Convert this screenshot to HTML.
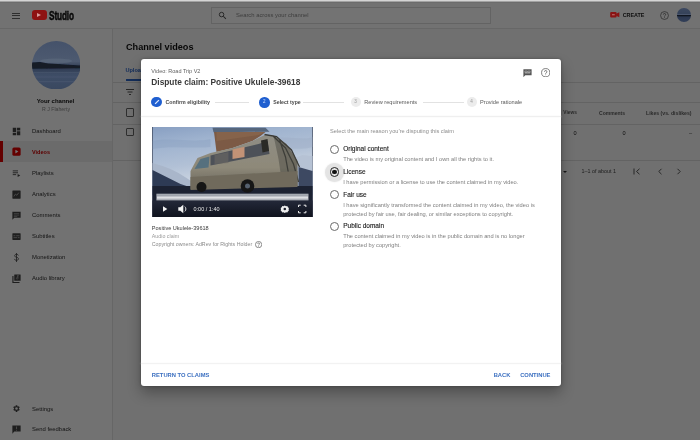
<!DOCTYPE html>
<html><head><meta charset="utf-8">
<style>
*{margin:0;padding:0;box-sizing:border-box}
html,body{width:700px;height:440px;overflow:hidden;background:#fff}
body{font-family:"Liberation Sans",sans-serif;position:relative;color:#0d0d0d}
.a{position:absolute;white-space:nowrap;line-height:1}
#page{position:absolute;left:0;top:0;width:700px;height:440px;background:#f9f9f9}
#topstrip{position:absolute;left:0;top:0;width:700px;height:1.5px;background:#d2d2d2}
#hdr{position:absolute;left:0;top:0;width:700px;height:29px;background:#fcfcfc;border-bottom:1px solid #e4e4e4}
#side{position:absolute;left:0;top:29px;width:113px;height:411px;background:#fcfcfc;border-right:1px solid #e2e2e2}
#main{position:absolute;left:113px;top:29px;width:587px;height:411px}
.nt{left:32px;font-size:5.9px;color:#333}
.ni{left:11.5px}
#overlay{position:absolute;left:0;top:0;width:700px;height:440px;background:rgba(0,0,0,0.55)}
#modal{position:absolute;left:141px;top:59px;width:420px;height:327px;background:#fff;border-radius:3px;box-shadow:0 0 3px rgba(0,0,0,0.3),0 7px 14px rgba(0,0,0,0.3)}
.st{font-size:5.5px;color:#555}
.rad{position:absolute;width:9.2px;height:9.2px;border:1px solid #6a6a6a;border-radius:50%}
.ot{font-size:6.5px;color:#1a1a1a;-webkit-text-stroke:0.12px #1a1a1a}
.od{font-size:5.69px;color:#7e7e7e;line-height:8.6px;white-space:normal}
.btn{font-size:5.8px;font-weight:bold;color:#3b6fc0}
.hl{position:absolute;height:1px;background:#dcdcdc}
</style></head><body><div id="root" style="position:absolute;left:0;top:0;width:700px;height:440px;filter:blur(0.35px)">
<div id="page">
  <div id="hdr">
    <div class="a" style="left:12px;top:12.5px;width:8px;height:1px;background:#666"></div>
    <div class="a" style="left:12px;top:15px;width:8px;height:1px;background:#666"></div>
    <div class="a" style="left:12px;top:17.5px;width:8px;height:1px;background:#666"></div>
    <div class="a" style="left:48.5px;top:10px;font-size:12.8px;font-weight:bold;transform:scaleX(0.645);transform-origin:left top;color:#111;letter-spacing:-0.2px;-webkit-text-stroke:0.5px #111">Studio</div>
    <div class="a" style="left:211px;top:7px;width:280px;height:16.5px;border:1px solid #dcdcdc;background:#fff"></div>
    <svg class="a" style="left:218px;top:11px" width="9" height="9" viewBox="0 0 24 24"><circle cx="9.5" cy="9.5" r="6" fill="none" stroke="#555" stroke-width="2.6"/><path d="M14 14l7 7" stroke="#555" stroke-width="2.8"/></svg>
    <div class="a" style="left:236px;top:13.1px;font-size:5.85px;color:#8a8a8a">Search across your channel</div>
    <div class="a" style="left:622.7px;top:12.4px;font-size:5.4px;font-weight:bold;color:#222;transform:scaleY(1.15);transform-origin:left top">CREATE</div>
    <svg class="a" style="left:660.3px;top:10.8px" width="9" height="9" viewBox="0 0 24 24"><circle cx="12" cy="12" r="10.5" fill="none" stroke="#555" stroke-width="1.8"/><path d="M9 9.5a3 3 0 1 1 4 2.8c-.8.4-1 1-1 2v.5" fill="none" stroke="#555" stroke-width="1.9"/><circle cx="12" cy="17.5" r="1.2" fill="#555"/></svg>
  </div>
  <div id="side">
    <div class="a" style="left:0;top:69.2px;width:111px;text-align:center;font-size:6px;font-weight:bold;color:#111">Your channel</div>
    <div class="a" style="left:0;top:77.6px;width:112px;text-align:center;font-size:5.2px;color:#8a8a8a">R J Flaherty</div>
    <div class="a" style="left:0;top:112.4px;width:112px;height:20.6px;background:#ededed"></div>
    <div class="a" style="left:0;top:112.4px;width:2.6px;height:20.6px;background:#d00"></div>
    <svg class="a ni" style="top:97.8px" width="9" height="9" viewBox="0 0 24 24"><path d="M2 2h9v11H2zM13 2h9v7h-9zM13 11h9v11h-9zM2 15h9v7H2z" fill="#444"/></svg>
    <div class="a nt" style="top:100.2px">Dashboard</div>
    <svg class="a ni" style="top:118.4px" width="9" height="9" viewBox="0 0 24 24"><rect x="1" y="1" width="22" height="22" rx="4" fill="#d00"/><path d="M9 7v10l8-5z" fill="#fff"/></svg>
    <div class="a nt" style="top:121.1px;color:#c00;font-weight:bold;font-size:5.5px">Videos</div>
    <svg class="a ni" style="top:139.8px" width="9" height="9" viewBox="0 0 24 24"><path d="M2 5h14M2 10h14M2 15h9" stroke="#444" stroke-width="2.4"/><path d="M15 13l7 4-7 4z" fill="#444"/></svg>
    <div class="a nt" style="top:142.0px">Playlists</div>
    <svg class="a ni" style="top:160.8px" width="9" height="9" viewBox="0 0 24 24"><rect x="1" y="1" width="22" height="22" rx="1.5" fill="#444"/><path d="M5 17l4-6 4 3 5-7" stroke="#bbb" stroke-width="2" fill="none"/></svg>
    <div class="a nt" style="top:162.9px">Analytics</div>
    <svg class="a ni" style="top:181.8px" width="9" height="9" viewBox="0 0 24 24"><path d="M1 2h22v16H6l-5 5z" fill="#444"/><path d="M5 7h14M5 11h14M5 14.5h9" stroke="#bbb" stroke-width="1.6"/></svg>
    <div class="a nt" style="top:183.8px">Comments</div>
    <svg class="a ni" style="top:202.8px" width="9" height="9" viewBox="0 0 24 24"><rect x="1" y="3" width="22" height="18" rx="1.5" fill="#444"/><path d="M4 10h5M11 10h9M4 15h10M16 15h4" stroke="#bbb" stroke-width="2"/></svg>
    <div class="a nt" style="top:204.7px">Subtitles</div>
    <svg class="a ni" style="top:223.8px" width="9" height="9" viewBox="0 0 24 24"><path d="M12 0v24M17 6.5C16.4 4.3 14.3 3.5 12 3.5 9.3 3.5 7 4.9 7 7.2c0 2.5 2.4 3.3 5 4 2.7.7 5.2 1.6 5.2 4.4 0 2.4-2.4 3.9-5.2 3.9-2.8 0-5-1.3-5.4-3.7" stroke="#444" stroke-width="2.2" fill="none"/></svg>
    <div class="a nt" style="top:225.7px">Monetization</div>
    <svg class="a ni" style="top:244.8px" width="9" height="9" viewBox="0 0 24 24"><path d="M1 5h3v16h16v3H1z" fill="#444"/><rect x="6" y="1" width="17" height="17" rx="1" fill="#444"/><path d="M16 4v7.5a2.2 2.2 0 1 1-1.6-2.1V4h3.5" stroke="#bbb" stroke-width="1.6" fill="none"/></svg>
    <div class="a nt" style="top:246.6px">Audio library</div>
    <svg class="a ni" style="top:375.0px" width="9" height="9" viewBox="0 0 24 24"><path d="M19.4 13a7.5 7.5 0 0 0 0-2l2.1-1.6-2-3.5-2.5 1a7.6 7.6 0 0 0-1.7-1L15 3h-4l-.4 2.9a7.6 7.6 0 0 0-1.7 1l-2.5-1-2 3.5L6.6 11a7.5 7.5 0 0 0 0 2l-2.1 1.6 2 3.5 2.5-1c.5.4 1.1.8 1.7 1L11 21h4l.4-2.9c.6-.2 1.2-.6 1.7-1l2.5 1 2-3.5zM13 15.5a3.5 3.5 0 1 1 0-7 3.5 3.5 0 0 1 0 7z" fill="#444" transform="translate(-1 0)"/></svg>
    <div class="a nt" style="top:377.6px">Settings</div>
    <svg class="a ni" style="top:395.8px" width="9" height="9" viewBox="0 0 24 24"><path d="M1 1h22v16H6l-5 6z" fill="#444"/><path d="M11 4h2v7h-2zM11 13h2v2h-2z" fill="#bbb"/></svg>
    <div class="a nt" style="top:398.1px">Send feedback</div>
  </div>
  <div id="main">
    <div class="a" style="left:13px;top:13.3px;font-size:9.9px;font-weight:bold;color:#111;transform:scaleX(0.925);transform-origin:left top">Channel videos</div>
    <div class="a" style="left:12.4px;top:38.8px;font-size:5.6px;font-weight:bold;color:#2e66c8">Uploads</div>
    <div class="a" style="left:13px;top:50.4px;width:32px;height:2px;background:#2e66c8"></div>
    <div class="hl" style="left:0;top:52.5px;width:587px"></div>
    <div class="hl" style="left:0;top:72.7px;width:587px"></div>
    <div class="hl" style="left:0;top:94.7px;width:587px"></div>
    <div class="hl" style="left:0;top:130.8px;width:587px"></div>
    <svg class="a" style="left:12.5px;top:59.5px" width="8" height="6" viewBox="0 0 8 6"><path d="M0 0.5h8M1.5 3h5M3 5.5h2" stroke="#555" stroke-width="1"/></svg>
    <div class="a" style="left:13.2px;top:79.4px;width:8.2px;height:8.2px;border:1px solid #666;border-radius:1px"></div>
    <div class="a" style="left:13.2px;top:99px;width:8.2px;height:8.2px;border:1px solid #666;border-radius:1px"></div>
    <div class="a" style="left:450.3px;top:82.1px;font-size:4.8px;font-weight:bold;color:#606060">Views</div>
    <div class="a" style="left:486px;top:82.1px;font-size:5.05px;font-weight:bold;color:#606060">Comments</div>
    <div class="a" style="left:533px;top:82.1px;font-size:5.16px;font-weight:bold;color:#606060">Likes (vs. dislikes)</div>
    <div class="a" style="left:460.5px;top:101.7px;font-size:5.6px;color:#222">0</div>
    <div class="a" style="left:509.5px;top:101.7px;font-size:5.6px;color:#222">0</div>
    <div class="a" style="left:576px;top:101.5px;font-size:5.6px;color:#333">–</div>
    <div class="a" style="left:449.5px;top:141.6px;width:0;height:0;border-top:2.6px solid #333;border-left:2.6px solid transparent;border-right:2.6px solid transparent"></div>
    <div class="a" style="left:468.5px;top:140.4px;font-size:5.4px;color:#444">1–1 of about 1</div>
    <svg class="a" style="left:520px;top:138.5px" width="8" height="7" viewBox="0 0 8 7"><path d="M1 0.5v6M6.5 0.8L3.5 3.5l3 2.7" stroke="#555" stroke-width="1" fill="none"/></svg>
    <svg class="a" style="left:543.5px;top:138.5px" width="6" height="7" viewBox="0 0 6 7"><path d="M4.5 0.8L1.8 3.5l2.7 2.7" stroke="#555" stroke-width="1" fill="none"/></svg>
    <svg class="a" style="left:563px;top:138.5px" width="6" height="7" viewBox="0 0 6 7"><path d="M1.5 0.8l2.7 2.7-2.7 2.7" stroke="#555" stroke-width="1" fill="none"/></svg>
  </div>
</div>
<div id="overlay"></div>
<div id="toplayer">
  <div class="a" style="left:0;top:0;width:700px;height:1px;background:#d4d4d4"></div>
  <div class="a" style="left:0;top:1px;width:700px;height:1px;background:#a2a2a2"></div>
  <div class="a" style="left:0;top:2px;width:700px;height:1px;background:#6c6c6c"></div>
  <div class="a" style="left:31.5px;top:9.8px;width:15px;height:10.5px;background:#8e1212;border-radius:3px"></div>
  <div class="a" style="left:37.4px;top:12.6px;width:0;height:0;border-left:4.4px solid #d89a9a;border-top:2.5px solid transparent;border-bottom:2.5px solid transparent"></div>
  <svg class="a" style="left:610px;top:12.3px" width="9.5" height="5.5" viewBox="0 0 10 6"><rect x="0" y="0" width="7" height="6" rx="1.2" fill="#8a1414"/><path d="M6.5 2L10 0.3v5.4L6.5 4z" fill="#8a1414"/><path d="M2 3h3" stroke="#c08080" stroke-width="1"/></svg>
  <div class="a" style="left:677.2px;top:8.4px;width:13.6px;height:13.6px;border-radius:50%;background:linear-gradient(#3c4860 0%,#36435a 40%,#4e5a72 46%,#0c121c 54%,#2c3850 64%,#323f58 100%)"></div>
  <svg class="a" style="left:31.8px;top:40.5px" width="48.5" height="48.5" viewBox="0 0 48.5 48.5">
    <defs><clipPath id="avc"><circle cx="24.25" cy="24.25" r="24.25"/></clipPath>
    <linearGradient id="avg" x1="0" y1="0" x2="0" y2="1"><stop offset="0" stop-color="#45526a"/><stop offset="0.42" stop-color="#4d5a70"/><stop offset="0.55" stop-color="#2e3a50"/><stop offset="0.7" stop-color="#3e4d66"/><stop offset="1" stop-color="#3a4860"/></linearGradient>
    <filter id="avb"><feGaussianBlur stdDeviation="0.6"/></filter></defs>
    <g clip-path="url(#avc)"><rect width="48.5" height="48.5" fill="url(#avg)"/>
    <g filter="url(#avb)">
    <ellipse cx="24" cy="20" rx="16" ry="2.4" fill="#606d82" opacity="0.5"/>
    <path d="M0 21.5 L8 21 L16 22.5 L26 23 L36 23.8 L48.5 24.5 L48.5 27.2 L0 27.8z" fill="#131a28"/>
    <path d="M0 31h48.5v1.2H0zM0 35.5h48.5v1H0zM0 40h48.5v1.2H0z" fill="#536279" opacity="0.35"/>
    </g></g>
  </svg>
</div>
<div id="modal">
  <div class="a" style="left:10.3px;top:9.6px;font-size:5.5px;color:#606060">Video: Road Trip V2</div>
  <div class="a" style="left:10.3px;top:19.1px;font-size:8.33px;font-weight:bold;color:#3a3a3a">Dispute claim: Positive Ukulele-39618</div>
  <svg class="a" style="left:382px;top:9.9px" width="9" height="8.2" viewBox="0 0 24 22"><path d="M1 1h22v16H6l-5 5z" fill="#555"/><path d="M5 5.5h6v4H5zM13 5.5h6v4h-6zM5 11h14" stroke="#ddd" stroke-width="1.2" fill="none"/></svg>
  <svg class="a" style="left:399.6px;top:8.9px" width="9.4" height="9.4" viewBox="0 0 24 24"><circle cx="12" cy="12" r="10.5" fill="none" stroke="#555" stroke-width="1.9"/><path d="M9 9.5a3 3 0 1 1 4 2.8c-.8.4-1 1-1 2v.5" fill="none" stroke="#555" stroke-width="2"/><circle cx="12" cy="17.5" r="1.2" fill="#555"/></svg>
  <!-- steps -->
  <div class="a" style="left:10.35px;top:37.95px;width:10.5px;height:10.5px;border-radius:50%;background:#1f5fd0"></div>
  <svg class="a" style="left:12.6px;top:40.2px" width="6" height="6" viewBox="0 0 6 6"><path d="M1.1 4.9L4.9 1.1" stroke="#dfeaff" stroke-width="1.3"/></svg>
  <div class="a st" style="left:24.5px;top:40.64px;font-weight:bold;font-size:5.27px;color:#4a4a4a">Confirm eligibility</div>
  <div class="a" style="left:74px;top:42.7px;width:34px;height:0.8px;background:#e2e2e2"></div>
  <div class="a" style="left:118.05px;top:38.05px;width:10.5px;height:10.5px;border-radius:50%;background:#1f5fd0"></div>
  <div class="a" style="left:118.05px;top:41.2px;width:10.5px;text-align:center;font-size:4.5px;color:#cfe0ff">2</div>
  <div class="a st" style="left:132.3px;top:40.64px;font-weight:bold;font-size:5.19px;color:#4a4a4a">Select type</div>
  <div class="a" style="left:162px;top:42.7px;width:41px;height:0.8px;background:#e2e2e2"></div>
  <div class="a" style="left:209.5px;top:38px;width:10px;height:10px;border-radius:50%;background:#ececec"></div>
  <div class="a" style="left:209.5px;top:40.8px;width:10px;text-align:center;font-size:4.6px;color:#999">3</div>
  <div class="a st" style="left:223.3px;top:40.64px;font-size:5.64px;color:#5a5a5a">Review requirements</div>
  <div class="a" style="left:282px;top:42.7px;width:41px;height:0.8px;background:#e2e2e2"></div>
  <div class="a" style="left:325.5px;top:38px;width:10px;height:10px;border-radius:50%;background:#ececec"></div>
  <div class="a" style="left:325.5px;top:40.8px;width:10px;text-align:center;font-size:4.6px;color:#999">4</div>
  <div class="a st" style="left:339px;top:40.64px;font-size:5.64px;color:#5a5a5a">Provide rationale</div>
  <div class="a" style="left:0;top:56.8px;width:420px;height:1px;background:#efefef;box-shadow:0 0 2px #f2f2f2"></div>
  <!-- video -->
  <div class="a" id="vid" style="left:11px;top:68px;width:160.5px;height:89.5px;background:#1b2030;overflow:hidden">
    <svg width="161" height="90" viewBox="0 0 160 90">
      <defs>
        <linearGradient id="sky" x1="0" y1="0" x2="0.25" y2="1"><stop offset="0" stop-color="#889fc2"/><stop offset="0.2" stop-color="#9fb3cf"/><stop offset="0.45" stop-color="#b2c1d6"/><stop offset="0.62" stop-color="#c9d3e0"/><stop offset="1" stop-color="#cdd5e0"/></linearGradient>
        <linearGradient id="body" x1="0" y1="0" x2="0" y2="1"><stop offset="0" stop-color="#8f8d84"/><stop offset="0.6" stop-color="#8e8979"/><stop offset="1" stop-color="#66625a"/></linearGradient>
        <linearGradient id="ctrl" x1="0" y1="0" x2="0" y2="1"><stop offset="0" stop-color="#232838"/><stop offset="1" stop-color="#10131e"/></linearGradient>
        <filter id="vb" x="-5%" y="-5%" width="110%" height="110%"><feGaussianBlur stdDeviation="0.45"/></filter>
      </defs>
      <g filter="url(#vb)">
      <rect width="160" height="90" fill="url(#sky)"/>
      <path d="M0 14 C20 10 40 16 58 12 L58 20 C40 22 20 18 0 22z" fill="#8299bb" opacity="0.3"/>
      <path d="M120 12 C135 8 150 14 160 10 L160 20 C145 24 130 20 120 22z" fill="#9aabc3" opacity="0.4"/>
      <path d="M0 36 L10 39 L18 42 L26 46 L34 51 L40 55 L40 68 L0 68z" fill="#a9b6ca"/>
      <path d="M0 43 L8 47 L18 52 L28 57 L40 61 L40 68 L0 68z" fill="#2f3b54"/>
      <path d="M142 31 L150 28 L160 29 L160 68 L142 68z" fill="#b6c2d4"/>
      <path d="M146 40 L160 44 L160 68 L146 68z" fill="#3c4862"/>
      <rect x="0" y="59" width="160" height="31" fill="#1d2130"/>
      <path d="M60 0.8 L113 0.8 L117 4.8 L61 5.2z" fill="#56667c"/>
      <path d="M61.5 5 L113 5 L108 9 L100 14 L80 21 L64 25z" fill="#7c5a44"/>
      <path d="M64 5 L112 5 L106 8 L64 14z" fill="#8e6a50" opacity="0.6"/>
      <path d="M38 44 L45 31 L58 26 L80 21 L100 14 L112 8 L121 8.5 L134 17 L145 34 L145 59 L38 62z" fill="url(#body)"/>
      <path d="M42 42 L48 32 L57 29.5 L56 40.5z" fill="#56707e"/>
      <path d="M58 28.5 L106 17 L115 14 L117 27 L58 38.5z" fill="#4d5159"/>
      <path d="M80 22.5 L92 19.8 L92 30 L80 32z" fill="#c29276"/>
      <path d="M62 28 L76 25 L76 36 L62 37z" fill="#6a6862" opacity="0.6"/>
      <path d="M108.5 13.5 L115 12 L116.5 24 L110 25.5z" fill="#2a2926"/>
      <path d="M112 7.5 L124 9.5 L139 23 L147 40 M120 8.5 L133 21 L141 37 L146 55 M127 13 L133 30 L137 52" stroke="#3a3a36" stroke-width="1.3" fill="none"/>
      <path d="M121 8.5 L134 17 L145 34 L145 59 L130 59 L126 32z" fill="#45443e" opacity="0.45"/>
      <path d="M38 50 L145 44 L145 60 L38 63z" fill="#6f6a5c"/>
      <circle cx="49" cy="60" r="5" fill="#141414"/>
      <circle cx="95" cy="59" r="6.8" fill="#141414"/>
      <circle cx="95" cy="59" r="2.5" fill="#55606e"/>
      </g>
      <rect x="0" y="73.5" width="160" height="16.5" fill="url(#ctrl)"/>
      <rect x="3.9" y="66.7" width="152.1" height="6.7" fill="#c4c8cf" opacity="0.85"/>
      <rect x="4.5" y="67.6" width="151" height="1.4" fill="#9aa0a8" opacity="0.7"/>
      <rect x="4.5" y="69.6" width="151" height="2" fill="#e2e4e8" opacity="0.9"/>
      <path d="M10.5 79.2 L10.5 84.8 L14.8 82z" fill="#f4f4f4"/>
      <path d="M25.8 80.3h2l3-2.6v8.6l-3-2.6h-2z" fill="#f4f4f4"/>
      <path d="M32.3 79.6a3.2 3.2 0 0 1 0 4.8" stroke="#f4f4f4" stroke-width="0.9" fill="none"/>
      <text x="41" y="84.2" font-family="Liberation Sans" font-size="5.5" fill="#ececec">0:00 / 1:40</text>
      <path d="M132.3 78.6l1.2.7 1.3-.3.6 1.2 1 .8-.3 1.3.3 1.3-1 .8-.6 1.2-1.3-.3-1.2.7-1.2-.7-1.3.3-.6-1.2-1-.8.3-1.3-.3-1.3 1-.8.6-1.2 1.3.3z" fill="#eee"/>
      <circle cx="132.3" cy="82" r="1.3" fill="#1a1e2a"/>
      <path d="M146 80v-1.8h2.2M151.2 78.2h2.2V80M153.4 84v1.8h-2.2M148.2 85.8H146V84" stroke="#eee" stroke-width="1" fill="none"/>
    </svg>
  </div>
  <div class="a" style="left:10.8px;top:167.1px;font-size:5.57px;color:#3a3a3a">Positive Ukulele-39618</div>
  <div class="a" style="left:10.8px;top:175px;font-size:5.3px;color:#9a9a9a">Audio claim</div>
  <div class="a" style="left:10.8px;top:182.7px;font-size:5.28px;color:#8a8a8a">Copyright owners: AdRev for Rights Holder</div>
  <svg class="a" style="left:114px;top:182px" width="7.2" height="7.2" viewBox="0 0 24 24"><circle cx="12" cy="12" r="10.5" fill="none" stroke="#555" stroke-width="2.2"/><path d="M9 9.5a3 3 0 1 1 4 2.8c-.8.4-1 1-1 2v.5" fill="none" stroke="#555" stroke-width="2.2"/><circle cx="12" cy="17.5" r="1.3" fill="#555"/></svg>
  <!-- options -->
  <div class="a" style="left:189.1px;top:70.1px;font-size:5.65px;color:#8c8c8c">Select the main reason you’re disputing this claim</div>
  <div class="rad" style="left:188.8px;top:85.6px"></div>
  <div class="a ot" style="left:202.2px;top:87.4px">Original content</div>
  <div class="a od" style="left:202.2px;top:96px">The video is my original content and I own all the rights to it.</div>
  <div class="a" style="left:183.5px;top:103.5px;width:19px;height:19px;border-radius:50%;background:#e4e4e4;box-shadow:0 0 2px #e8e8e8"></div>
  <div class="rad" style="left:188.8px;top:108.4px;border-color:#222;border-width:1.1px"></div>
  <div class="a" style="left:191.1px;top:110.7px;width:4.6px;height:4.6px;border-radius:50%;background:#111"></div>
  <div class="a ot" style="left:202.2px;top:110.2px">License</div>
  <div class="a od" style="left:202.2px;top:118.8px">I have permission or a license to use the content claimed in my video.</div>
  <div class="rad" style="left:188.8px;top:130.9px"></div>
  <div class="a ot" style="left:202.2px;top:132.6px">Fair use</div>
  <div class="a od" style="left:202.2px;top:142.1px;width:200px">I have significantly transformed the content claimed in my video, the video is protected by fair use, fair dealing, or similar exceptions to copyright.</div>
  <div class="rad" style="left:188.8px;top:162.7px"></div>
  <div class="a ot" style="left:202.2px;top:163.56px">Public domain</div>
  <div class="a od" style="left:202.2px;top:173.1px;width:190px">The content claimed in my video is in the public domain and is no longer protected by copyright.</div>
  <!-- footer -->
  <div class="a" style="left:0;top:304.4px;width:420px;height:1px;background:#f2f2f2;box-shadow:0 0 2px #f4f4f4"></div>
  <div class="a btn" style="left:10.8px;top:313.6px">RETURN TO CLAIMS</div>
  <div class="a btn" style="left:352.7px;top:313.6px">BACK</div>
  <div class="a btn" style="left:379.2px;top:313.6px">CONTINUE</div>
</div>
</div></body></html>
